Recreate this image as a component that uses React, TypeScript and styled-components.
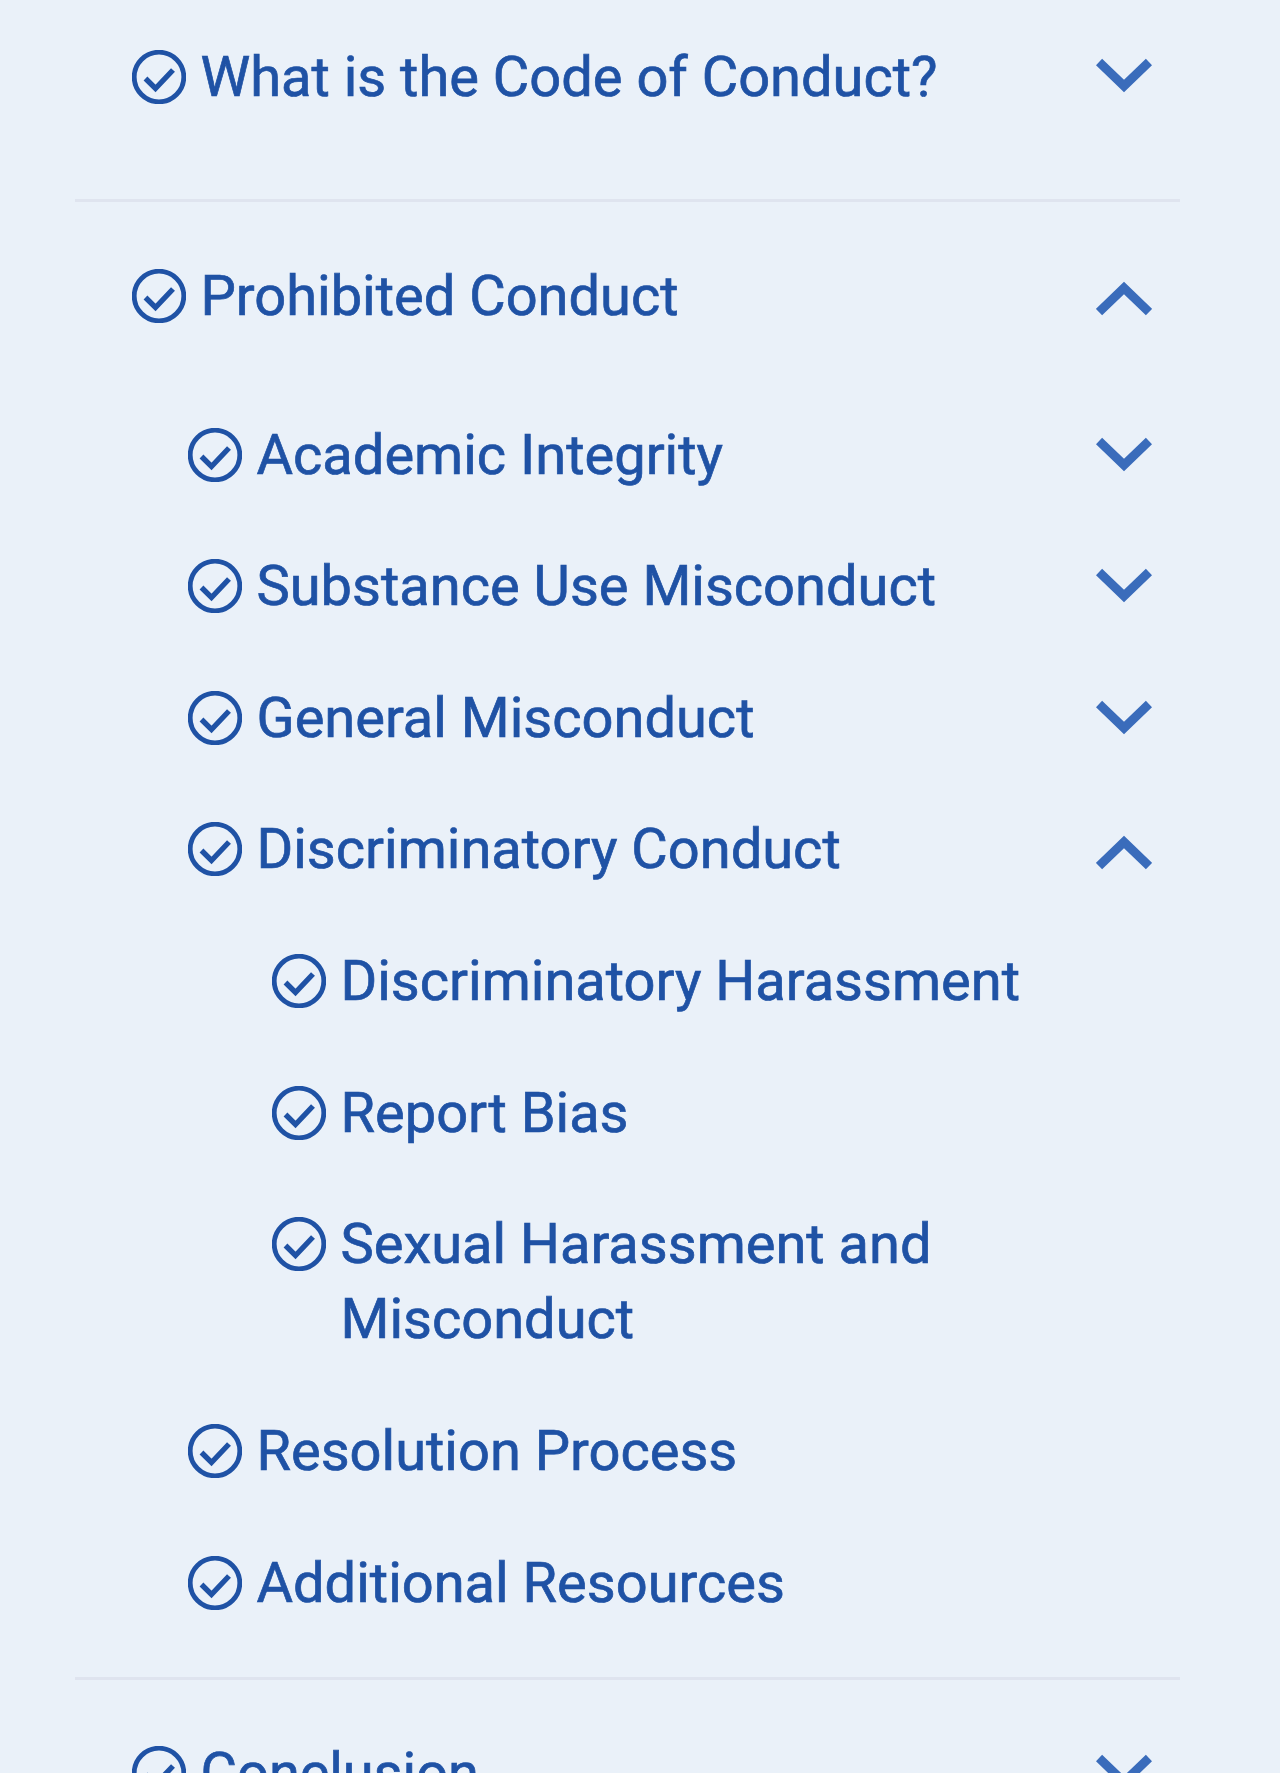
import React from "react";
import styled, { createGlobalStyle } from "styled-components";

const Global = createGlobalStyle`
  html, body { margin: 0; padding: 0; background: #eaf1f9; }
  body { height: 1773px; overflow: hidden; }
`;

const Nav = styled.nav`
  box-sizing: border-box;
  width: 1280px;
  height: 1773px;
  overflow: hidden;
  padding: 40px 100px 0 75px;
  background: #eaf1f9;
  font-family: Roboto, "Liberation Sans", sans-serif;
`;

const Section = styled.section<{ $tail: number; $last?: boolean }>`
  padding-bottom: ${(p) => p.$tail}px;
  margin-bottom: ${(p) => (p.$last ? 0 : 56.5)}px;
  border-bottom: ${(p) => (p.$last ? "none" : "3px solid #dfe4ef")};
`;

const List = styled.ul<{ $indent: number }>`
  list-style: none;
  margin: 0;
  padding: 0 0 0 ${(p) => p.$indent}px;
  display: flex;
  flex-direction: column;
  gap: 56.65px;
`;

const SubList = styled(List)`
  margin-top: 56.65px;
`;

const TopList = styled(List)`
  margin-top: 84px;
`;

const Row = styled.div<{ $level: number }>`
  display: flex;
  align-items: flex-start;
  padding-left: ${(p) => (p.$level === 0 ? 57 : 0)}px;
  padding-right: 28px;
`;

const Check = styled.svg`
  flex: none;
  width: 54px;
  height: 54px;
  margin-top: 10px;
  margin-right: 14.5px;
`;

const Label = styled.span`
  flex: 1;
  min-width: 0;
  font-size: 56px;
  line-height: 75px;
  font-weight: 400;
  -webkit-text-stroke: 0.7px #1f52a5;
  color: #1f52a5;
`;

const Chevron = styled.svg<{ $up?: boolean; $nested?: boolean }>`
  flex: none;
  width: 56px;
  height: 35px;
  margin-top: ${(p) => (p.$up ? 22.5 : p.$nested ? 19 : 18)}px;
`;

const CheckIcon = () => (
  <Check viewBox="0 0 54 54" fill="none" stroke="#1f52a5" strokeWidth="4.8">
    <circle cx="27" cy="27" r="24.8" />
    <polyline points="13.5,28.5 23.5,38.5 41,20" strokeWidth="5.4" />
  </Check>
);

const ChevronIcon = ({ up, nested }: { up?: boolean; nested?: boolean }) => (
  <Chevron $up={up} $nested={nested} viewBox="0 0 56 35" fill="none" stroke="#3a6cbb" strokeWidth="9">
    <polyline points={up ? "3,31 28,7 53,31" : "3,4 28,28 53,4"} />
  </Chevron>
);

type Item = { text: string; state?: "open" | "closed"; children?: Item[] };

const items: Item[] = [
  { text: "Academic Integrity", state: "closed" },
  { text: "Substance Use Misconduct", state: "closed" },
  { text: "General Misconduct", state: "closed" },
  {
    text: "Discriminatory Conduct",
    state: "open",
    children: [
      { text: "Discriminatory Harassment" },
      { text: "Report Bias" },
      { text: "Sexual Harassment and Misconduct" },
    ],
  },
  { text: "Resolution Process" },
  { text: "Additional Resources" },
];

const Entry = ({ item, level }: { item: Item; level: number }) => (
  <Row $level={level}>
    <CheckIcon />
    <Label>{item.text}</Label>
    {item.state && <ChevronIcon up={item.state === "open"} nested={level > 0} />}
  </Row>
);

const Branch = ({ item, level }: { item: Item; level: number }) => (
  <li>
    <Entry item={item} level={level} />
    {item.children && (
      <SubList $indent={84}>
        {item.children.map((c) => (
          <Branch key={c.text} item={c} level={level + 1} />
        ))}
      </SubList>
    )}
  </li>
);

export default function App() {
  return (
    <Nav>
      <Global />
      <Section $tail={84}>
        <Entry item={{ text: "What is the Code of Conduct?", state: "closed" }} level={0} />
      </Section>
      <Section $tail={56}>
        <Entry item={{ text: "Prohibited Conduct", state: "open" }} level={0} />
        <TopList $indent={113}>
          {items.map((i) => (
            <Branch key={i.text} item={i} level={1} />
          ))}
        </TopList>
      </Section>
      <Section $tail={0} $last>
        <Entry item={{ text: "Conclusion", state: "closed" }} level={0} />
      </Section>
    </Nav>
  );
}
